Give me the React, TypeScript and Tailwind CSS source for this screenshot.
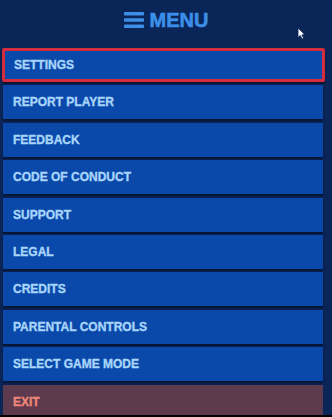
const items = [
  'SETTINGS',
  'REPORT PLAYER',
  'FEEDBACK',
  'CODE OF CONDUCT',
  'SUPPORT',
  'LEGAL',
  'CREDITS',
  'PARENTAL CONTROLS',
  'SELECT GAME MODE',
]

export default function App() {
  return (
    <div
      className="relative w-[332px] h-[417px] overflow-hidden bg-[#0a2557] border-b-2 border-black"
      style={{ fontFamily: '"Liberation Sans", Arial, sans-serif' }}
    >
      {/* Header */}
      <div className="h-[48px] flex items-center justify-center gap-[6px] pb-[9px]">
        <svg width="20" height="16" viewBox="0 0 20 16">
          <rect x="0" y="0" width="20" height="3.6" rx="0.8" fill="#3c8fe8" />
          <rect x="0" y="6.2" width="20" height="3.6" rx="0.8" fill="#3c8fe8" />
          <rect x="0" y="12.4" width="20" height="3.6" rx="0.8" fill="#3c8fe8" />
        </svg>
        <span className="text-[20px] font-bold leading-none text-[#3c8fe8] [-webkit-text-stroke:0.6px_#3c8fe8]">MENU</span>
      </div>

      {/* Cursor */}
      <svg className="absolute left-[297px] top-[27px]" width="9" height="13" viewBox="0 0 9 13">
        <path d="M1 1 L1 10.5 L3.3 8.4 L5 12 L6.6 11.3 L5 7.8 L8 7.8 Z" fill="#ffffff" stroke="#0a2557" strokeWidth="0.8" />
      </svg>

      {/* Menu list */}
      <div className="flex flex-col gap-[3.4px] pl-[3px] pr-[9px]">
        {items.map((label, i) => (
          <div
            key={label}
            className={
              i === 0
                ? 'h-[34px] -ml-px -mr-[2px] flex items-center pl-[9px] bg-[#0a49aa] border-[3px] border-[#d62c40] rounded-[2px] shadow-[0_2px_2px_rgba(0,0,0,0.45)]'
                : 'h-[34px] flex items-center pl-[10px] bg-[#0a49aa] shadow-[0_2px_2px_rgba(0,0,0,0.45)]'
            }
          >
            <span className="text-[12px] font-bold text-[#a8d5fa] leading-none [-webkit-text-stroke:0.35px_#a8d5fa]">{label}</span>
          </div>
        ))}
        <div className="h-[34px] flex items-center pl-[10px] bg-[#5e3a4f]">
          <span className="text-[12px] font-bold text-[#ef8676] leading-none [-webkit-text-stroke:0.35px_#ef8676]">EXIT</span>
        </div>
      </div>
    </div>
  )
}
